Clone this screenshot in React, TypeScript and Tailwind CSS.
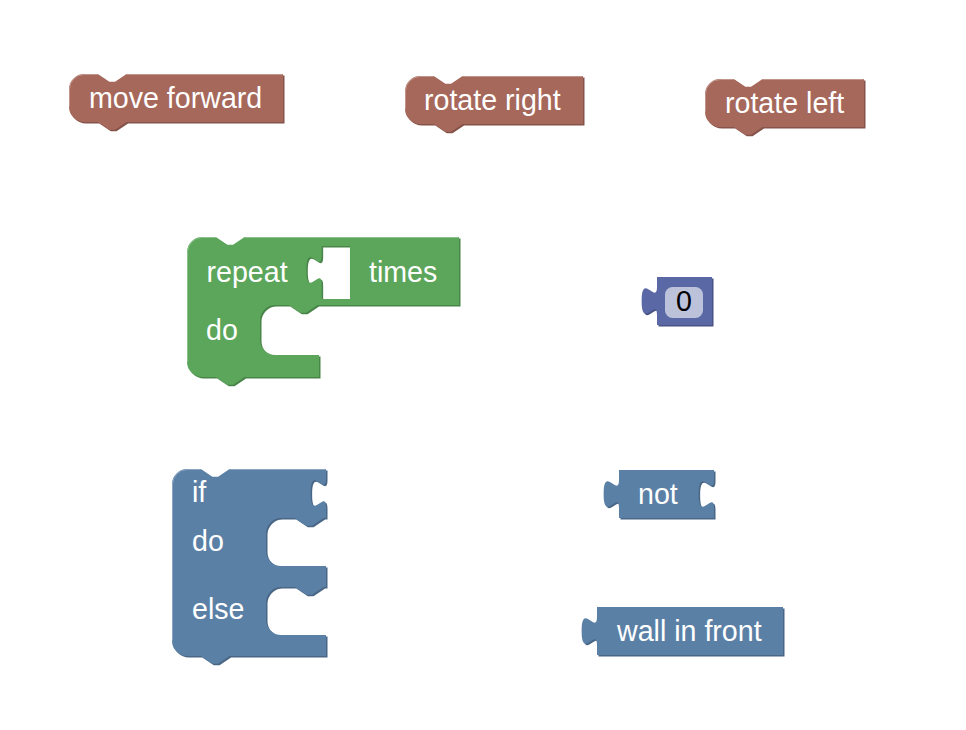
import type { ReactNode } from 'react';

// Blockly-style geometry, unit size scaled to the workspace zoom
const S = 1.92;
const R = 8 * S;
const r = (v: number) => Math.round(v * 100) / 100;

const NOTCH_RIGHT = `l ${r(6 * S)},${r(4 * S)} ${r(3 * S)},0 ${r(6 * S)},${r(-4 * S)}`;
const NOTCH_LEFT = `l ${r(-6 * S)},${r(4 * S)} ${r(-3 * S)},0 ${r(-6 * S)},${r(-4 * S)}`;
const TAB_DOWN = `v ${r(5 * S)} c 0,${r(10 * S)} ${r(-8 * S)},${r(-8 * S)} ${r(-8 * S)},${r(7.5 * S)} s ${r(8 * S)},${r(-2.5 * S)} ${r(8 * S)},${r(7.5 * S)}`;
const tabUp = (y: number) =>
  `V ${r(y + 20 * S)} c 0,${r(-10 * S)} ${r(-8 * S)},${r(8 * S)} ${r(-8 * S)},${r(-7.5 * S)} s ${r(8 * S)},${r(2.5 * S)} ${r(8 * S)},${r(-7.5 * S)}`;

const top = (w: number) =>
  `M 0,${r(R)} A ${r(R)},${r(R)} 0 0,1 ${r(R)},0 H ${r(15 * S)} ${NOTCH_RIGHT} H ${w}`;
const bottom = (h: number) =>
  `H ${r(30 * S)} ${NOTCH_LEFT} H ${r(R)} A ${r(R)},${r(R)} 0 0,1 0,${r(h - R)} Z`;
const statement = (ix: number, y: number, h: number, armRight: number) =>
  `V ${y} H ${r(ix + 30 * S)} ${NOTCH_LEFT} H ${r(ix + R)} a ${r(R)},${r(R)} 0 0,0 ${r(-R)},${r(R)} v ${r(h - 2 * R)} a ${r(R)},${r(R)} 0 0,0 ${r(R)},${r(R)} H ${armRight}`;
const highlight = (h: number) =>
  `M 0.5,${r(h - R)} V ${r(R)} A ${r(R - 0.5)},${r(R - 0.5)} 0 0,1 ${r(R)},0.5 H ${r(15 * S)} M ${r(30 * S)},0.5 H`;

const stmtBlock = (w: number, h: number) => `${top(w)} V ${h} ${bottom(h)}`;
const outputBlock = (w: number, h: number, valueInput = false) =>
  `M 0,0 H ${w} ${valueInput ? TAB_DOWN : ''} V ${h} H 0 ${tabUp(0)} Z`;

const repeatPath =
  `${top(272)} ${statement(73, 68, 50, 132)} V 140 ${bottom(140)} ` +
  `M ${r(119.3 + 8 * S)},9 h 28.3 v 53 h -28.3 ${tabUp(9)} Z`;

const ifPath =
  `${top(154)} ${TAB_DOWN} ${statement(94, 49, 48, 154)} ${statement(94, 118, 48, 154)} V 187 ${bottom(187)}`;

const COLORS = {
  brown: { fill: '#a6685b', dark: '#85534a', light: '#c1958c' },
  green: { fill: '#5ba65b', dark: '#498549', light: '#8cc18c' },
  blue: { fill: '#5b80a6', dark: '#496685', light: '#8ca6c1' },
  purple: { fill: '#5b68a6', dark: '#495385', light: '#8c95c1' },
};

interface BlockProps {
  className: string;
  d: string;
  color: keyof typeof COLORS;
  w: number;
  h: number;
  hl?: string;
  children?: ReactNode;
}

function Block({ className, d, color, w, h, hl, children }: BlockProps) {
  const c = COLORS[color];
  return (
    <svg className={`absolute overflow-visible ${className}`} width={w} height={h}>
      <g transform="translate(16,0)">
        <path d={d} fill={c.dark} fillRule="evenodd" transform="translate(1.5,1.5)" />
        <path d={d} fill={c.fill} fillRule="evenodd" />
        {hl && <path d={hl} fill="none" stroke={c.light} strokeWidth={1} />}
        {children}
      </g>
    </svg>
  );
}

function Label({ x, y, children }: { x: number; y: number; children: ReactNode }) {
  return (
    <text x={x} y={y} className="fill-white text-[28.6px]">
      {children}
    </text>
  );
}

export default function App() {
  return (
    <div className="relative w-[966px] h-[730px] bg-white overflow-hidden font-['Liberation_Sans',Arial,sans-serif]">
      {/* motion blocks */}
      <Block className="left-[53px] top-[74px]" d={stmtBlock(214, 48)} color="brown" w={236} h={70} hl={highlight(48) + ' 213.5'}>
        <Label x={20} y={34}>move forward</Label>
      </Block>
      <Block className="left-[389px] top-[76px]" d={stmtBlock(178, 48)} color="brown" w={200} h={70} hl={highlight(48) + ' 177.5'}>
        <Label x={19} y={34}>rotate right</Label>
      </Block>
      <Block className="left-[689px] top-[79px]" d={stmtBlock(159, 48)} color="brown" w={180} h={70} hl={highlight(48) + ' 158.5'}>
        <Label x={20} y={34}>rotate left</Label>
      </Block>

      {/* repeat loop */}
      <Block className="left-[171px] top-[237px]" d={repeatPath} color="green" w={292} h={160} hl={highlight(140) + ' 271.5'}>
        <Label x={19.5} y={44.5}>repeat</Label>
        <Label x={182} y={44.5}>times</Label>
        <Label x={19} y={103}>do</Label>
      </Block>

      {/* number */}
      <Block className="left-[641px] top-[277px]" d={outputBlock(55, 48)} color="purple" w={76} h={52}>
        <rect x={8} y={10} width={38} height={31} rx={7.7} fill="#ffffff" fillOpacity={0.6} />
        <text x={27} y={34} textAnchor="middle" className="fill-black text-[28.6px]">
          0
        </text>
      </Block>

      {/* if / else */}
      <Block className="left-[156px] top-[469px]" d={ifPath} color="blue" w={176} h={206} hl={highlight(187) + ' 153.5'}>
        <Label x={20} y={32.5}>if</Label>
        <Label x={20} y={81.5}>do</Label>
        <Label x={20} y={150}>else</Label>
      </Block>

      {/* logic */}
      <Block className="left-[603px] top-[470px]" d={outputBlock(95, 48, true)} color="blue" w={116} h={52}>
        <Label x={19} y={34}>not</Label>
      </Block>
      <Block className="left-[581px] top-[607px]" d={outputBlock(186, 48)} color="blue" w={206} h={52}>
        <Label x={20} y={34}>wall in front</Label>
      </Block>
    </div>
  );
}
